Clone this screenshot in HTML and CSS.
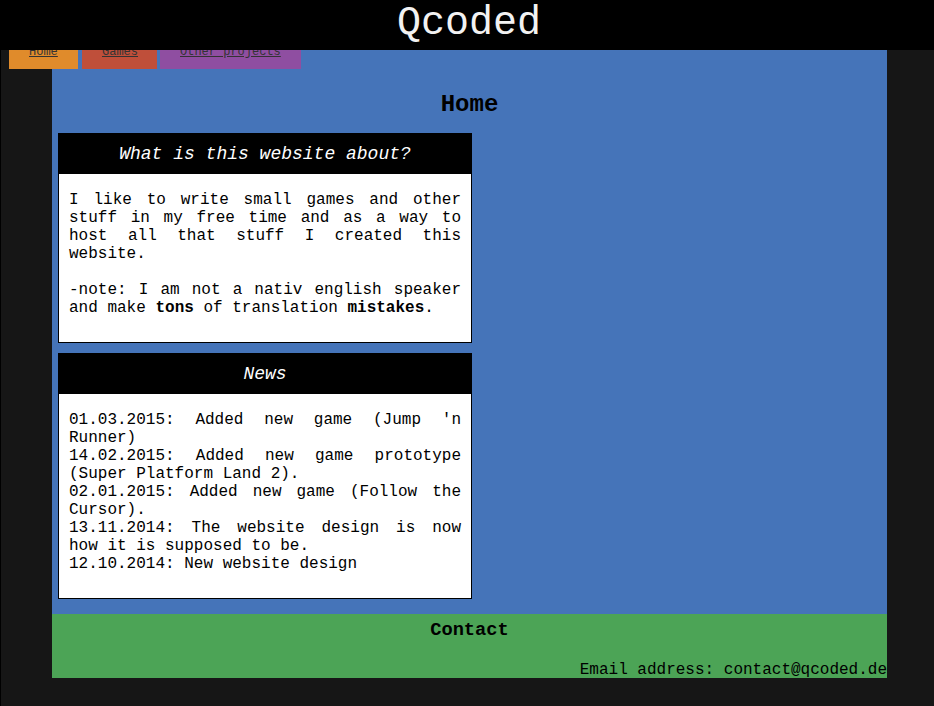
FILE: index.html
```html
<!DOCTYPE html>
<html lang="en">
<head>
<meta charset="utf-8">
<title>Qcoded</title>
<link rel="stylesheet" href="styles.css">
</head>
<body>
<div class="site">
  <header class="topbar">
    <h1 class="logo">Qcoded</h1>
  </header>
  <nav class="tabs">
    <a class="tab tab-home" href="#">Home</a>
    <a class="tab tab-games" href="#">Games</a>
    <a class="tab tab-other" href="#">Other projects</a>
  </nav>
  <main class="content">
    <h2 class="page-title">Home</h2>
    <section class="card">
      <h3 class="card-head">What is this website about?</h3>
      <p class="card-body">I like to write small games and other stuff in my free time and as a way to host all that stuff I created this website.<br><br>-note: I am not a nativ english speaker and make <b>tons</b> of translation <b>mistakes</b>.</p>
    </section>
    <section class="card">
      <h3 class="card-head">News</h3>
      <p class="card-body">01.03.2015: Added new game (Jump 'n Runner)<br>14.02.2015: Added new game prototype (Super Platform Land 2).<br>02.01.2015: Added new game (Follow the Cursor).<br>13.11.2014: The website design is now how it is supposed to be.<br>12.10.2014: New website design</p>
    </section>
  </main>
  <footer class="contact">
    <h3 class="contact-title">Contact</h3>
    <p class="contact-mail">Email address: contact@qcoded.de</p>
  </footer>
</div>
</body>
</html>
```
FILE: styles.css
```css
html, body {
  margin: 0;
  padding: 0;
}
body {
  background: #161616;
  font-family: "Liberation Mono", "Courier New", monospace;
  color: #000;
}
.site {
  position: relative;
  border-left: 1px solid #000;
  min-height: 706px;
  box-sizing: border-box;
}
.topbar {
  position: relative;
  z-index: 2;
  margin-left: -1px;
  height: 50px;
  background: #000;
  display: flex;
  justify-content: center;
  align-items: center;
}
.logo {
  margin: 0;
  font-weight: normal;
  font-size: 40px;
  line-height: 42px;
  color: #f2f2f2;
  transform: translate(2px, -1px);
}
.tabs {
  position: absolute;
  z-index: 1;
  top: 35px;
  left: 8px;
  display: flex;
  gap: 4px;
}
.tab {
  display: block;
  padding: 10px 20px 10px 20px;
  font-size: 12px;
  line-height: 14px;
  color: #333;
  text-decoration: underline;
}
.tab-home { background: #e08b2b; width: 29px; }
.tab-games { background: #bf4f3a; width: 35px; }
.tab-other { background: #8f4ea1; width: 101px; margin-left: -1px; }
.content {
  margin-left: 51px;
  width: 835px;
  background: #4574b9;
  padding: 25px 0 5px 6px;
  box-sizing: border-box;
  display: flex;
  flex-direction: column;
  align-items: flex-start;
}
.page-title {
  align-self: stretch;
  margin: 16px 0 15px -6px;
  text-align: center;
  font-size: 24px;
  line-height: 27px;
}
.card {
  width: 414px;
  box-sizing: border-box;
  border: 1px solid #000;
  background: #fff;
  margin-bottom: 10px;
  padding: 0 10px 10px;
}
.card-head {
  margin: 0 -10px;
  height: 40px;
  background: #000;
  color: #fff;
  font-size: 18px;
  font-style: italic;
  font-weight: normal;
  line-height: 40px;
  text-align: center;
}
.card-body {
  margin: 17px 0 15px;
  font-size: 16px;
  line-height: 18px;
  text-align: justify;
}
.contact {
  margin-left: 51px;
  width: 835px;
  height: 64px;
  background: #4ca456;
  box-sizing: border-box;
  padding-top: 6px;
}
.contact-title {
  margin: 0 0 20px;
  font-size: 18.72px;
  line-height: 21px;
  text-align: center;
}
.contact-mail {
  margin: 0;
  font-size: 16px;
  line-height: 18px;
  text-align: right;
}
```
